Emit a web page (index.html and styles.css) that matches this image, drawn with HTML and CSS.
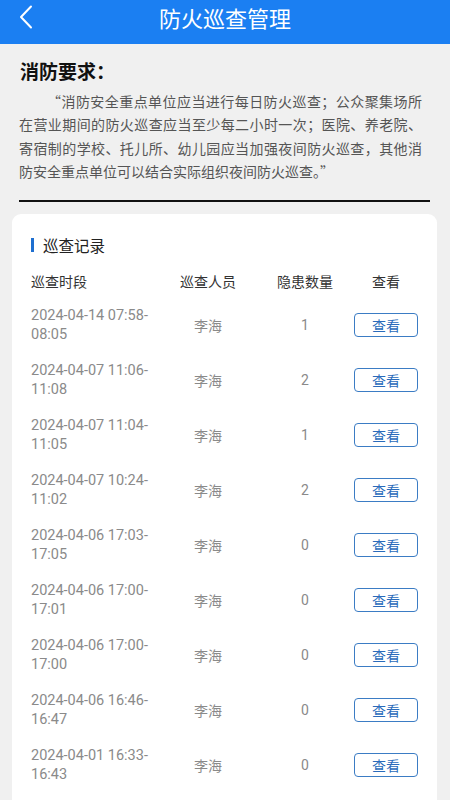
FILE: index.html
```html
<!DOCTYPE html>
<html lang="zh-CN">
<head>
<meta charset="utf-8">
<meta name="viewport" content="width=450">
<link rel="stylesheet" href="styles.css">
</head>
<body>
<header class="topbar">
  <span class="back">
    <svg width="14" height="24" viewBox="0 0 14 24"><path d="M12 1.5 L2 12 L12 22.5" fill="none" stroke="#fff" stroke-width="2" stroke-linecap="round" stroke-linejoin="round"/></svg>
  </span>
  <h1 class="title">防火巡查管理</h1>
</header>

<section class="req">
  <h2 class="req-title">消防要求：</h2>
  <p class="req-text">“消防安全重点单位应当进行每日防火巡查；公众聚集场所在营业期间的防火巡查应当至少每二小时一次；医院、养老院、寄宿制的学校、托儿所、幼儿园应当加强夜间防火巡查，其他消防安全重点单位可以结合实际组织夜间防火巡查。”</p>
  <div class="rule"></div>
</section>

<section class="card">
  <div class="card-title">巡查记录</div>
  <div class="grid head">
    <div class="c1">巡查时段</div>
    <div class="cc">巡查人员</div>
    <div class="cc">隐患数量</div>
    <div class="cc">查看</div>
  </div>
  <div class="grid row"><div class="c1 date"><span>2024-04-14 07:58-</span><span>08:05</span></div><div class="cc muted">李海</div><div class="cc muted">1</div><div class="cc"><button class="btn">查看</button></div></div>
  <div class="grid row"><div class="c1 date"><span>2024-04-07 11:06-</span><span>11:08</span></div><div class="cc muted">李海</div><div class="cc muted">2</div><div class="cc"><button class="btn">查看</button></div></div>
  <div class="grid row"><div class="c1 date"><span>2024-04-07 11:04-</span><span>11:05</span></div><div class="cc muted">李海</div><div class="cc muted">1</div><div class="cc"><button class="btn">查看</button></div></div>
  <div class="grid row"><div class="c1 date"><span>2024-04-07 10:24-</span><span>11:02</span></div><div class="cc muted">李海</div><div class="cc muted">2</div><div class="cc"><button class="btn">查看</button></div></div>
  <div class="grid row"><div class="c1 date"><span>2024-04-06 17:03-</span><span>17:05</span></div><div class="cc muted">李海</div><div class="cc muted">0</div><div class="cc"><button class="btn">查看</button></div></div>
  <div class="grid row"><div class="c1 date"><span>2024-04-06 17:00-</span><span>17:01</span></div><div class="cc muted">李海</div><div class="cc muted">0</div><div class="cc"><button class="btn">查看</button></div></div>
  <div class="grid row"><div class="c1 date"><span>2024-04-06 17:00-</span><span>17:00</span></div><div class="cc muted">李海</div><div class="cc muted">0</div><div class="cc"><button class="btn">查看</button></div></div>
  <div class="grid row"><div class="c1 date"><span>2024-04-06 16:46-</span><span>16:47</span></div><div class="cc muted">李海</div><div class="cc muted">0</div><div class="cc"><button class="btn">查看</button></div></div>
  <div class="grid row"><div class="c1 date"><span>2024-04-01 16:33-</span><span>16:43</span></div><div class="cc muted">李海</div><div class="cc muted">0</div><div class="cc"><button class="btn">查看</button></div></div>
</section>
</body>
</html>
```

FILE: styles.css
```css
* { box-sizing: border-box; }
html, body { margin: 0; padding: 0; }
body {
  background: #f0f0f0;
  font-family: Roboto, "Noto Sans CJK SC", "Noto Sans", sans-serif;
  color: #333;
  width: 450px;
  height: 800px;
  overflow: hidden;
}
.topbar {
  height: 44px;
  background: #1b7ff2;
  display: flex;
  align-items: center;
  justify-content: center;
  position: relative;
}
.back {
  position: absolute;
  left: 19px;
  top: 5px;
  width: 14px;
  height: 24px;
  display: flex;
}
.title {
  margin: 0 0 10px 0;
  font-family: "Noto Sans CJK SC", sans-serif;
  font-size: 22px;
  font-weight: normal;
  color: #fff;
  line-height: 24px;
}
.req { padding: 15px 20px 0 19px; }
.req-title {
  margin: 0 0 0 1px;
  font-family: "Noto Sans CJK SC", sans-serif;
  font-size: 19px;
  font-weight: bold;
  color: #111;
  line-height: 24px;
}
.req-text {
  margin: 7px 8px 0 0;
  font-family: "Noto Sans CJK SC", sans-serif;
  font-size: 14px;
  line-height: 23.3px;
  color: #555;
  text-indent: 2em;
  text-align: justify;
}
.rule {
  margin-top: 17px;
  height: 1.5px;
  background: #111;
}
.card {
  margin: 12px 13px 0 12px;
  background: #fff;
  border-radius: 9px;
  padding: 20px 0 40px 19px;
}
.card-title {
  display: flex;
  align-items: center;
  font-family: "Noto Sans CJK SC", sans-serif;
  font-size: 15.5px;
  line-height: 22px;
  color: #222;
}
.card-title::before {
  content: "";
  width: 3px;
  height: 14px;
  background: #1e6fd0;
  margin-right: 9px;
}
.grid {
  display: grid;
  grid-template-columns: 129px 96px 98px 64px;
  align-items: center;
}
.head {
  height: 34px;
  margin-top: 8px;
  font-size: 14px;
  color: #333;
}
.cc { text-align: center; display: flex; justify-content: center; }
.row { height: 55px; font-size: 14px; }
.date {
  display: flex;
  flex-direction: column;
  color: #8a8a8a;
  font-size: 14.5px;
  line-height: 19px;
}
.muted { color: #8a8a8a; }
.btn {
  width: 64px;
  height: 24px;
  border: 1px solid #3b7cc4;
  border-radius: 4px;
  background: #fff;
  color: #2a6bbb;
  font-family: "Noto Sans CJK SC", sans-serif;
  font-size: 14px;
  padding: 0;
  line-height: 22px;
}
```
